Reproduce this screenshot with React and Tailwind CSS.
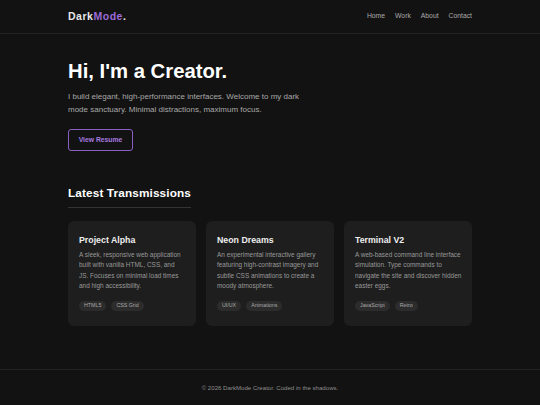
import React from "react";

const projects = [
  {
    title: "Project Alpha",
    text: "A sleek, responsive web application built with vanilla HTML, CSS, and JS. Focuses on minimal load times and high accessibility.",
    tags: ["HTML5", "CSS Grid"],
  },
  {
    title: "Neon Dreams",
    text: "An experimental interactive gallery featuring high-contrast imagery and subtle CSS animations to create a moody atmosphere.",
    tags: ["UI/UX", "Animations"],
  },
  {
    title: "Terminal V2",
    text: "A web-based command line interface simulation. Type commands to navigate the site and discover hidden easter eggs.",
    tags: ["JavaScript", "Retro"],
  },
];

export default function App() {
  return (
    <div className="min-h-[405px] bg-[#121212] text-[#e0e0e0] flex flex-col font-['Liberation_Sans',Arial,sans-serif]">
      {/* Header */}
      <header className="border-b border-[#222]">
        <div className="w-[404px] mx-auto h-[33px] flex items-center justify-between">
          <div className="text-[10.5px] font-bold tracking-[0.05em] text-[#e8e8e8]">
            Dark<span className="text-[#9b6bd6]">Mode</span>.
          </div>
          <nav className="flex gap-[10px] text-[6.8px] text-[#aaa]">
            <span>Home</span>
            <span>Work</span>
            <span>About</span>
            <span>Contact</span>
          </nav>
        </div>
      </header>

      <main className="w-[404px] mx-auto flex-1">
        {/* Hero */}
        <section className="pt-[24px]">
          <h1 className="text-[20.3px] leading-[26px] font-bold text-white">
            Hi, I'm a Creator.
          </h1>
          <p className="mt-[6px] w-[240px] text-[8px] leading-[13px] text-[#a8a8a8]">
            I build elegant, high-performance interfaces. Welcome to my dark mode sanctuary. Minimal distractions, maximum focus.
          </p>
          <button className="block mt-[13px] w-[65px] h-[22px] border border-[#8a5fc0] rounded-[3px] text-[6.8px] font-bold text-[#a77be0]">
            View Resume
          </button>
        </section>

        {/* Projects */}
        <section className="mt-[35px]">
          <h2 className="w-fit pb-[6px] border-b border-[#333] text-[11.8px] leading-[15px] font-bold text-white tracking-[0.01em]">
            Latest Transmissions
          </h2>
          <div className="mt-[13px] grid grid-cols-3 gap-[10px]">
            {projects.map((p) => (
              <div key={p.title} className="bg-[#1e1e1e] rounded-[6px] h-[105px] pl-[11px] pr-[10.5px] pt-[14px]">
                <h3 className="text-[8.8px] leading-[11px] font-bold text-[#eee]">{p.title}</h3>
                <p className="mt-[4px] text-[6.45px] leading-[10.3px] text-[#999]">{p.text}</p>
                <div className="mt-[10px] flex gap-[5px]">
                  {p.tags.map((t) => (
                    <span key={t} className="bg-[#2c2c2c] rounded-full px-[5px] h-[10px] flex items-center text-[5.3px] text-[#aaa]">
                      {t}
                    </span>
                  ))}
                </div>
              </div>
            ))}
          </div>
        </section>
      </main>

      {/* Footer */}
      <footer className="mt-[43px] border-t border-[#222] h-[36px] flex items-center justify-center text-[6.1px] text-[#8e8e8e]">
        © 2026 DarkMode Creator. Coded in the shadows.
      </footer>
    </div>
  );
}
